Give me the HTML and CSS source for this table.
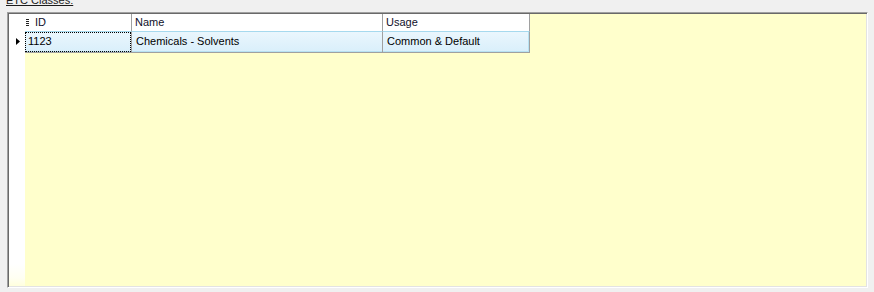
FILE: index.html
```html
<!DOCTYPE html>
<html>
<head>
<meta charset="utf-8">
<link rel="stylesheet" href="styles.css">
</head>
<body>
<div class="label"><span>ETC Classes:</span></div>
<div class="grid">
  <div class="rowheaders">
    <div class="rh-head"></div>
    <div class="rh-cell">
      <svg class="marker" width="4" height="7" viewBox="0 0 4 7"><path d="M0 0 L4 3.5 L0 7 Z" fill="#000"/></svg>
    </div>
  </div>
  <div class="columns">
    <div class="row hdr">
      <div class="cell c-id">
        <svg class="grip" width="3" height="8" viewBox="0 0 3 8"><rect x="0" y="0" width="3" height="1" fill="#222"/><rect x="0" y="2" width="3" height="1" fill="#222"/><rect x="0" y="4" width="3" height="1" fill="#222"/><rect x="0" y="6" width="3" height="1" fill="#222"/></svg>
        <span>ID</span>
      </div>
      <div class="cell c-name">Name</div>
      <div class="cell c-usage">Usage</div>
    </div>
    <div class="row data">
      <div class="cell c-id"><span class="focus">1123</span></div>
      <div class="cell c-name">Chemicals - Solvents</div>
      <div class="cell c-usage">Common &amp; Default</div>
    </div>
  </div>
</div>
</body>
</html>
```
FILE: styles.css
```css
html, body {
  margin: 0;
  padding: 0;
  background: #f0f0f0;
  font-family: "Liberation Sans", Arial, sans-serif;
  font-size: 11px;
  color: #000;
  overflow: hidden;
}

.label {
  margin-top: -6px;
  height: 13px;
  line-height: 13px;
  padding-left: 6px;
}

.label span {
  text-decoration: underline;
  color: #1a1a1a;
}

.grid {
  margin-top: 5px;
  margin-left: 7px;
  width: 857px;
  height: 272px;
  border-top: 1px solid #a0a0a0;
  border-left: 1px solid #a0a0a0;
  border-right: 1px solid #ffffff;
  border-bottom: 1px solid #ffffff;
  box-shadow: inset 1px 1px 0 #696969, inset -1px -1px 0 #e3e3e3;
  padding: 1px;
  background: #ffffcc;
  display: flex;
}

.rowheaders {
  width: 16px;
  display: flex;
  flex-direction: column;
  background: linear-gradient(to bottom, #ffffff calc(100% - 22px), #fffff2 calc(100% - 8px), #ffffdd 100%);
}

.rh-head {
  height: 17px;
}

.rh-cell {
  height: 22px;
  display: flex;
  align-items: center;
  padding-left: 7px;
  padding-bottom: 1px;
  box-sizing: border-box;
}

.marker {
  display: block;
}

.columns {
  display: flex;
  flex-direction: column;
}

.row {
  display: flex;
}

.cell {
  box-sizing: border-box;
  border-right: 1px solid #a0a0a0;
  display: flex;
  align-items: center;
  white-space: nowrap;
}

.c-id { width: 107px; }
.c-name { width: 251px; }
.c-usage { width: 147px; }

.hdr {
  height: 17px;
}

.hdr .cell {
  background: #ffffff;
  padding-left: 3px;
  padding-bottom: 1px;
  color: #10102a;
}

.hdr .c-id {
  padding-left: 1px;
}

.grip {
  display: block;
  margin-right: 6px;
  margin-top: 1px;
}

.data {
  height: 22px;
}

.data .cell {
  background: linear-gradient(to bottom, #eaf6fd, #d9effb);
  border-top: 1px solid #a6d9ee;
  border-bottom: 1px solid #a0a0a0;
  box-shadow: inset 0 -1px 0 #b8e2f3;
  padding-left: 4px;
  padding-bottom: 2px;
}

.data .c-usage {
  box-shadow: inset 0 -1px 0 #b8e2f3, inset -1px 0 0 #b8e2f3;
}

.data .c-id {
  padding: 0;
  align-items: stretch;
}

.focus {
  flex: 1;
  display: flex;
  align-items: center;
  padding-left: 3px;
  padding-bottom: 2px;
  outline: 1px dotted #000;
  outline-offset: -1px;
}
```
